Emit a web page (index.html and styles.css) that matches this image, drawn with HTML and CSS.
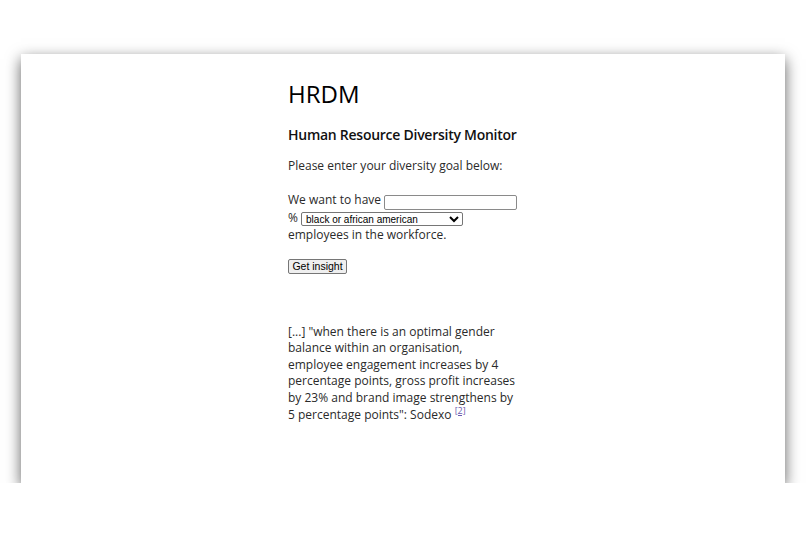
FILE: index.html
```html
<!DOCTYPE html>
<html lang="en">
<head>
<meta charset="utf-8">
<title>HRDM</title>
<link rel="stylesheet" href="styles.css">
</head>
<body>
<div class="sheet">
  <main class="column">
    <h1 class="title">HRDM</h1>
    <h2 class="subtitle">Human Resource Diversity Monitor</h2>
    <p class="intro">Please enter your diversity goal below:</p>
    <form class="goal">
      <p class="goal-text">We want to have <input class="goal-input" type="text"><br>% <select class="goal-select"><option>black or african american</option></select><br>employees in the workforce.</p>
      <button class="goal-button" type="button">Get insight</button>
    </form>
    <p class="quote">[...] "when there is an optimal gender balance within an organisation, employee engagement increases by 4 percentage points, gross profit increases by 23% and brand image strengthens by 5 percentage points": Sodexo <sup class="ref"><a href="#">[2]</a></sup></p>
  </main>
</div>
</body>
</html>
```

FILE: styles.css
```css
html, body {
  margin: 0;
  background: #ffffff;
}

body {
  padding: 54px 21px 0;
  font-family: "Open Sans", "DejaVu Sans", sans-serif;
  color: #2a2a2a;
}

.sheet {
  height: 429px;
  background: #ffffff;
  box-shadow: 0 5px 14px rgba(0, 0, 0, 0.62);
  display: flex;
  justify-content: center;
}

.column {
  width: 230px;
  padding-top: 23px;
}

.title {
  margin: 0;
  font-size: 24px;
  font-weight: 400;
  line-height: 33px;
  color: #000;
}

.subtitle {
  margin: 15px 0 0;
  font-size: 14px;
  font-weight: 600;
  line-height: 19px;
  letter-spacing: -0.26px;
  white-space: nowrap;
  color: #111;
}

.intro {
  margin: 14px 0 0;
  font-size: 12px;
  line-height: 16.4px;
}

.goal {
  margin: 0;
}

.goal-text {
  margin: 18px 0 0;
  font-size: 12px;
  line-height: 16.6px;
}

.goal-input {
  box-sizing: border-box;
  width: 133px;
  height: 15px;
  margin: 0;
  padding: 0 2px;
  border: 1px solid #8a8a8a;
  border-radius: 2px;
  vertical-align: -2px;
  font: 10px "Liberation Sans", Arial, sans-serif;
}

.goal-select {
  box-sizing: border-box;
  width: 162px;
  height: 14px;
  margin: 0;
  padding: 0;
  border: 1px solid #767676;
  border-radius: 2px;
  vertical-align: -1px;
  font: 10px "Liberation Sans", Arial, sans-serif;
  color: #000;
  background: #fff;
}

.goal-button {
  display: block;
  box-sizing: border-box;
  width: 59px;
  height: 15px;
  margin: 15px 0 0;
  padding: 0;
  border: 1px solid #767676;
  border-radius: 2px;
  background: #efefef;
  font: 10.5px "Liberation Sans", Arial, sans-serif;
  color: #000;
}

.quote {
  margin: 50px 0 0;
  font-size: 12px;
  line-height: 16.6px;
}

.ref {
  font-size: 9px;
  line-height: 0;
  vertical-align: 5px;
}

.ref a {
  color: #6a5bb0;
  text-decoration: underline;
}
```
